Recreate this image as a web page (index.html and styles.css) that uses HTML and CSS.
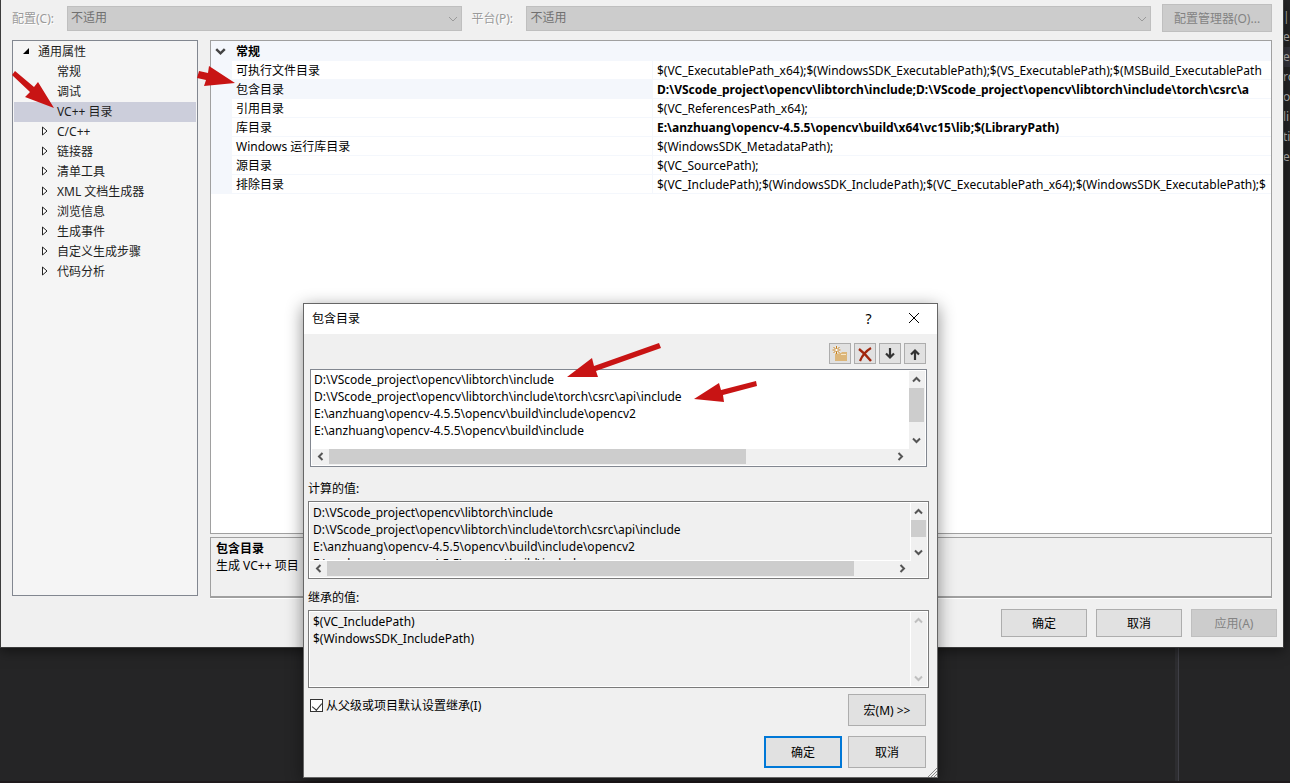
FILE: index.html
```
<!DOCTYPE html>
<html lang="zh-CN">
<head>
    <meta charset="utf-8">
    <meta name="viewport" content="width=device-width, initial-scale=1">
    <title>属性页</title>
    <link rel="stylesheet" href="styles.css">
</head>
<body>

<svg class="symbols" aria-hidden="true">
    <symbol id="chevron" viewBox="0 0 9 9"><path d="M1 6.5 4.5 3 8 6.5" fill="none" stroke="currentColor" stroke-width="2"/></symbol>
    <symbol id="thin-chevron" viewBox="0 0 10 10"><path d="M1 3l4 4 4-4" fill="none" stroke="currentColor"/></symbol>
    <symbol id="closed" viewBox="0 0 6 10"><path d="M.5 1v8L5 5z" fill="#fff" stroke="#222"/></symbol>
    <symbol id="arrow-down" viewBox="0 0 16 16"><path d="M8 2v10M4 7.5 8 11.5 12 7.5" fill="none" stroke="#333" stroke-width="2.2"/></symbol>
</svg>

<div class="editor">
    <div class="code">
        <span>|</span><span>e</span><span class="current">e</span><span>ro</span><span>ol</span><span>li</span><span>ti</span><span>e</span>
    </div>
    <div class="splitter"></div>
</div>

<div class="window">
    <div class="config">
        <label for="configuration">配置(C):</label>
        <div class="select">
            <select id="configuration" disabled><option>不适用</option></select>
            <svg><use href="#thin-chevron"/></svg>
        </div>
        <label for="platform" class="platform">平台(P):</label>
        <div class="select">
            <select id="platform" disabled><option>不适用</option></select>
            <svg><use href="#thin-chevron"/></svg>
        </div>
        <button class="manager" disabled>配置管理器(O)...</button>
    </div>

    <div class="content">
        <ul class="tree">
            <li class="root"><svg viewBox="0 0 8 8"><path d="M7 1v6H1z"/></svg>通用属性</li>
            <li>常规</li>
            <li>调试</li>
            <li class="selected">VC++ 目录</li>
            <li><svg><use href="#closed"/></svg>C/C++</li>
            <li><svg><use href="#closed"/></svg>链接器</li>
            <li><svg><use href="#closed"/></svg>清单工具</li>
            <li><svg><use href="#closed"/></svg>XML 文档生成器</li>
            <li><svg><use href="#closed"/></svg>浏览信息</li>
            <li><svg><use href="#closed"/></svg>生成事件</li>
            <li><svg><use href="#closed"/></svg>自定义生成步骤</li>
            <li><svg><use href="#closed"/></svg>代码分析</li>
        </ul>

        <div class="properties">
            <div class="grid">
                <table>
                    <colgroup><col class="gutter"><col class="name"><col></colgroup>
                    <tr class="group"><th><svg><use href="#chevron"/></svg></th><th colspan="2">常规</th></tr>
                    <tr><td></td><td>可执行文件目录</td><td>$(VC_ExecutablePath_x64);$(WindowsSDK_ExecutablePath);$(VS_ExecutablePath);$(MSBuild_ExecutablePath</td></tr>
                    <tr class="active"><td></td><td>包含目录</td><td><b>D:\VScode_project\opencv\libtorch\include;D:\VScode_project\opencv\libtorch\include\torch\csrc\a</b></td></tr>
                    <tr><td></td><td>引用目录</td><td>$(VC_ReferencesPath_x64);</td></tr>
                    <tr><td></td><td>库目录</td><td><b>E:\anzhuang\opencv-4.5.5\opencv\build\x64\vc15\lib;$(LibraryPath)</b></td></tr>
                    <tr><td></td><td>Windows 运行库目录</td><td>$(WindowsSDK_MetadataPath);</td></tr>
                    <tr><td></td><td>源目录</td><td>$(VC_SourcePath);</td></tr>
                    <tr><td></td><td>排除目录</td><td>$(VC_IncludePath);$(WindowsSDK_IncludePath);$(VC_ExecutablePath_x64);$(WindowsSDK_ExecutablePath);$</td></tr>
                </table>
            </div>
            <div class="description">
                <b>包含目录</b>
                <p>生成 VC++ 项目</p>
            </div>
        </div>
    </div>

    <div class="footer">
        <button>确定</button>
        <button>取消</button>
        <button disabled>应用(A)</button>
    </div>
</div>

<div class="dialog" role="dialog" aria-label="包含目录">
    <div class="titlebar">
        <span>包含目录</span>
        <button aria-label="帮助">?</button>
        <button aria-label="关闭"><svg viewBox="0 0 12 12"><path d="M1 1l10 10M11 1 1 11" fill="none" stroke="#000"/></svg></button>
    </div>
    <div class="body">
        <div class="toolbar">
            <button aria-label="新行">
                <svg viewBox="0 0 16 16">
                    <path d="M3 7h6l1-1h5v9H3z" fill="#dcb67a"/>
                    <path d="M9 8.5h5" stroke="#f6e6c8"/>
                    <path d="M4.500 0v8M.5 4h8M1.500 1l6 6M7.500 1l-6 6" stroke="#f0f0f0" stroke-width="2"/>
                    <path d="M4.500 0v8M.5 4h8M1.500 1l6 6M7.500 1l-6 6" stroke="#c27d1a"/>
                    <circle cx="4.500" cy="4" r="1.200" fill="#fff"/>
                </svg>
            </button>
            <button aria-label="删除"><svg viewBox="0 0 16 16"><path d="M2 3c4 3 8 7 12 12" fill="none" stroke="#a1260d" stroke-width="2.4"/><path d="M14 2C9 5 5 10 3 15" fill="none" stroke="#a1260d" stroke-width="2.2"/></svg></button>
            <button aria-label="下移"><svg><use href="#arrow-down"/></svg></button>
            <button aria-label="上移"><svg class="up"><use href="#arrow-down"/></svg></button>
        </div>

        <div class="scrollbox paths">
            <textarea wrap="off" aria-label="包含目录" spellcheck="false">D:\VScode_project\opencv\libtorch\include
D:\VScode_project\opencv\libtorch\include\torch\csrc\api\include
E:\anzhuang\opencv-4.5.5\opencv\build\include\opencv2
E:\anzhuang\opencv-4.5.5\opencv\build\include</textarea>
            <div class="vscroll"><svg class="up"><use href="#chevron"/></svg><div class="track"><i></i></div><svg class="down"><use href="#chevron"/></svg></div>
            <div class="hscroll"><svg class="left"><use href="#chevron"/></svg><div class="track"><i></i></div><svg class="right"><use href="#chevron"/></svg></div>
        </div>

        <label for="evaluated">计算的值:</label>
        <div class="scrollbox evaluated">
            <textarea id="evaluated" wrap="off" readonly spellcheck="false">D:\VScode_project\opencv\libtorch\include
D:\VScode_project\opencv\libtorch\include\torch\csrc\api\include
E:\anzhuang\opencv-4.5.5\opencv\build\include\opencv2
E:\anzhuang\opencv-4.5.5\opencv\build\include</textarea>
            <div class="vscroll"><svg class="up"><use href="#chevron"/></svg><div class="track"><i></i></div><svg class="down"><use href="#chevron"/></svg></div>
            <div class="hscroll"><svg class="left"><use href="#chevron"/></svg><div class="track"><i></i></div><svg class="right"><use href="#chevron"/></svg></div>
        </div>

        <label for="inherited">继承的值:</label>
        <div class="scrollbox inherited">
            <textarea id="inherited" wrap="off" readonly spellcheck="false">$(VC_IncludePath)
$(WindowsSDK_IncludePath)</textarea>
            <div class="vscroll"><svg class="up"><use href="#chevron"/></svg><div class="track"></div><svg class="down"><use href="#chevron"/></svg></div>
        </div>

        <div class="options">
            <input type="checkbox" id="inherit" checked>
            <label for="inherit">从父级或项目默认设置继承(I)</label>
            <button>宏(M) &gt;&gt;</button>
        </div>
        <div class="actions">
            <button class="default">确定</button>
            <button>取消</button>
        </div>
    </div>
    <svg class="grip" viewBox="0 0 9 9"><path d="M0 9 9 0M3 9l6-6M6 9l3-3" stroke="#888"/></svg>
</div>

<!-- red pointers drawn over the windows -->
<svg class="pointers" width="780" height="420">
    <path d="M15 71 34 87 38 82 54 108 25 97 30 92 12 75z"/>
    <path d="M199 71 208 73 209 66 235 83 204 86 206 80 197 78z"/>
    <path d="M659 343 661 348 596 371 598 377 567 377 592 358 594 366z"/>
    <path d="M756 381 757 386 723 395 724 402 694 399 719 383 721 390z"/>
</svg>

</body>
</html>
```

FILE: styles.css
```
* {
  box-sizing: border-box;
}

body {
  margin: 0;
  height: 100vh;
  overflow: hidden;
  position: relative;
  background: #252526;
  color: #000;
  font-family: "Noto Sans", "Noto Sans CJK SC", sans-serif;
  font-size: 12px;
  line-height: 17px;
}

button, select, textarea {
  font: inherit;
  color: inherit;
}

button {
  background: #e1e1e1;
  border: 1px solid #adadad;
  padding: 0;
}

button:disabled {
  background: #ccc;
  border-color: #bfbfbf;
  color: #838383;
}

p {
  margin: 0;
}

.symbols {
  display: none;
}

/* editor behind the property pages */
.editor {
  height: 100%;
  border-bottom: 2px solid #1f1a1c;
}

.code {
  position: absolute;
  top: 7px;
  right: 0;
  width: 7px;
  display: flex;
  flex-direction: column;
  color: #b8b8b8;
  line-height: 20px;
}

.code .current {
  background: #35353d;
}

.splitter {
  height: 100%;
  width: 4px;
  margin-left: auto;
  margin-right: 111px;
  background: #2d2d30;
  border-right: 1px solid #3f3f46;
}

/* property pages window */
.window {
  position: absolute;
  top: 0;
  left: 0;
  right: 6px;
  bottom: 135px;
  display: flex;
  flex-direction: column;
  padding: 4px 11px 10px;
  background: #f0f0f0;
  border: 1px solid #3c3c3c;
  border-top: 0;
  box-shadow: 0 3px 12px rgba(0, 0, 0, .5);
}

.config {
  display: grid;
  grid-template-columns: 55px 395fr 64px 624fr 121px;
  align-items: center;
  height: 28px;
}

.config label {
  color: #9a9a9a;
  text-shadow: 1px 1px #fff;
}

.config .platform {
  padding-left: 9px;
}

.select {
  position: relative;
}

.select select {
  display: block;
  width: 100%;
  height: 25px;
  padding: 0 3px 2px;
  appearance: none;
  background: #ccc;
  border: 1px solid #bfbfbf;
  border-radius: 0;
  color: #707070;
  opacity: 1;
}

.select svg {
  position: absolute;
  top: 8px;
  right: 4px;
  width: 10px;
  height: 10px;
  color: #999;
}

.manager {
  height: 28px;
  margin-left: 11px;
}

.content {
  flex: 1;
  min-height: 0;
  display: flex;
  gap: 12px;
  margin-top: 8px;
}

.tree {
  width: 186px;
  flex: none;
  margin: 0 0 2px;
  padding: 1px;
  list-style: none;
  background: #f5f5f5;
  border: 1px solid #828790;
  color: #1e1e1e;
}

.tree li {
  display: flex;
  align-items: center;
  height: 20px;
  padding: 0 0 2px 43px;
}

.tree li.root {
  padding-left: 23px;
}

.tree li.selected {
  background: #cccedb;
}

.tree svg {
  width: 6px;
  height: 10px;
  margin-left: -15px;
  margin-right: 9px;
}

.tree .root svg {
  width: 8px;
  height: 8px;
  margin-right: 8px;
}

.properties {
  flex: 1;
  min-width: 0;
  display: flex;
  flex-direction: column;
  gap: 3px;
}

.grid {
  flex: 1;
  overflow: hidden;
  background: #fff;
  border: 1px solid #a0a0a0;
}

.grid table {
  width: 100%;
  table-layout: fixed;
  border-spacing: 0;
}

.grid .gutter {
  width: 21px;
}

.grid .name {
  width: 421px;
}

.grid td {
  height: 19px;
  padding: 0 4px;
  overflow: hidden;
  white-space: nowrap;
  border-bottom: 1px solid #f4f7fc;
}

.grid td:nth-child(2) {
  border-right: 1px solid #f4f7fc;
}

.grid td:last-child {
  padding-right: 0;
}

.grid td:first-child,
.grid .active td:nth-child(2),
.grid .group {
  background: #f4f7fc;
}

.grid th {
  height: 20px;
  padding: 0 4px;
  text-align: left;
}

.grid th svg {
  display: block;
  width: 11px;
  height: 11px;
  color: #444;
  transform: rotate(180deg);
}

.description {
  height: 61px;
  padding: 2px 5px;
  border: 1px solid #a0a0a0;
  border-bottom-width: 2px;
  box-shadow: 0 1px #fff;
}

.footer {
  display: flex;
  justify-content: flex-end;
  gap: 9px;
  margin-top: 11px;
  margin-right: -5px;
}

.footer button {
  width: 86px;
  height: 28px;
}

/* include directories dialog */
.dialog {
  position: absolute;
  top: 303px;
  left: 303px;
  right: 352px;
  bottom: 5px;
  display: flex;
  flex-direction: column;
  background: #f0f0f0;
  border: 1px solid #666;
  box-shadow: 0 4px 16px rgba(0, 0, 0, .45);
}

.titlebar {
  display: flex;
  align-items: center;
  height: 30px;
  padding: 0 1px 2px 8px;
  background: #fff;
}

.titlebar span {
  flex: 1;
}

.titlebar button {
  width: 45px;
  height: 28px;
  background: none;
  border: 0;
  font-size: 14px;
}

.titlebar button svg {
  display: block;
  width: 12px;
  height: 12px;
  margin: 0 auto;
}

.body {
  flex: 1;
  display: flex;
  flex-direction: column;
  padding: 9px 8px 9px 4px;
}

.toolbar {
  display: flex;
  justify-content: flex-end;
  gap: 3px;
  margin: 0 3px 5px;
}

.toolbar button {
  width: 22px;
  height: 21px;
}

.toolbar svg {
  display: block;
  width: 16px;
  height: 16px;
  margin: 0 auto;
}

.toolbar .up {
  transform: rotate(180deg);
}

.body > label {
  height: 17px;
}

.scrollbox {
  display: grid;
  grid-template-columns: 1fr 17px;
  grid-template-rows: 1fr 17px;
  height: 78px;
  border: 1px solid #7a7a7a;
  box-shadow: inset 0 0 0 1px #fff;
  padding: 1px 0 0 1px;
}

.scrollbox textarea {
  width: 100%;
  height: 100%;
  padding: 1px 3px 0;
  resize: none;
  overflow: hidden;
  white-space: pre;
  background: transparent;
  border: 0;
  outline: 0;
  line-height: 17px;
}

.vscroll, .hscroll {
  display: flex;
  color: #555;
}

.vscroll {
  flex-direction: column;
  width: 15px;
}

.hscroll {
  height: 15px;
}

.vscroll svg, .hscroll svg {
  flex: none;
  width: 9px;
  height: 9px;
  margin: 4px 3px;
}

.hscroll svg {
  margin: 3px 4px;
}

.scrollbox .down {
  transform: rotate(180deg);
}

.scrollbox .left {
  transform: rotate(-90deg);
}

.scrollbox .right {
  transform: rotate(90deg);
}

.track {
  flex: 1;
}

.track i {
  display: block;
  height: 100%;
  background: #cdcdcd;
}

.paths {
  height: 98px;
  margin: 0 2px 13px;
  border-color: #828790;
}

.paths textarea {
  background: #fff;
  padding: 0 2px;
}

.paths .hscroll .track i {
  width: 74%;
}

.paths .vscroll .track i {
  height: 77%;
}

.evaluated {
  margin-top: 4px;
  margin-bottom: 10px;
}

.evaluated textarea,
.inherited textarea {
  border-right: 1px solid #fff;
}

.evaluated textarea {
  border-bottom: 1px solid #fff;
}

.evaluated .hscroll .track i {
  width: 93%;
}

.evaluated .vscroll .track i {
  height: 70%;
}

.inherited {
  grid-template-rows: 1fr;
  margin-top: 4px;
}

.inherited .vscroll {
  color: #bfbfbf;
}

.options {
  display: flex;
  align-items: flex-start;
  gap: 3px;
  margin: 6px 3px 10px 2px;
}

.options input {
  position: relative;
  width: 13px;
  height: 13px;
  margin: 5px 0 0;
  appearance: none;
  background: #fff;
  border: 1px solid #333;
}

.options input:checked::after {
  content: "";
  position: absolute;
  top: 1px;
  left: 3px;
  width: 5px;
  height: 8px;
  border: solid #333;
  border-width: 0 1px 1px 0;
  transform: rotate(40deg);
}

.options label {
  margin-top: 3px;
}

.options button,
.actions button {
  width: 78px;
  height: 32px;
}

.options button {
  margin-left: auto;
}

.actions {
  display: flex;
  justify-content: flex-end;
  gap: 6px;
  margin-right: 3px;
}

.actions .default {
  border: 2px solid #0078d7;
}

.grip {
  position: absolute;
  right: 0;
  bottom: 0;
  width: 9px;
  height: 9px;
}

.pointers {
  position: absolute;
  top: 0;
  left: 0;
  fill: #c81414;
  pointer-events: none;
}
```
